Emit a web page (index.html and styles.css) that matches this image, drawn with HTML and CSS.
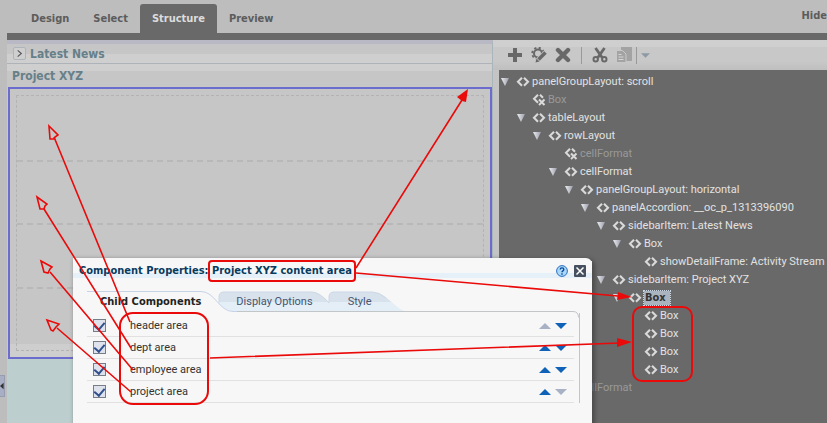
FILE: index.html
```html
<!DOCTYPE html>
<html lang="en">
<head>
<meta charset="utf-8">
<title>Composer - Structure view</title>
<link rel="stylesheet" href="styles.css">
</head>
<body>
<svg class="defs" aria-hidden="true">
  <symbol id="tag" viewBox="0 0 14 10"><path d="M6 .8 2 4.8 6 8.8M8 .8 12 4.8 8 8.8" fill="none" stroke="currentColor" stroke-width="2.1"/></symbol>
  <symbol id="tag-off" viewBox="0 0 14 12"><path d="M6 .8 2 4.8 6 8.8M8 .8 11 3.8M7 5.5l5.500 5.500M12.500 5.500 7 11" fill="none" stroke="currentColor" stroke-width="2"/></symbol>
  <symbol id="up" viewBox="0 0 12 6"><path d="M0 6 6 0l6 6z" fill="currentColor"/></symbol>
  <symbol id="down" viewBox="0 0 12 6"><path d="M0 0h12L6 6z" fill="currentColor"/></symbol>
  <linearGradient id="tri" x1="0" x2="1"><stop offset="0" stop-color="#eee"/><stop offset="1" stop-color="#9a9dae"/></linearGradient>
</svg>
<header class="top">
  <nav class="modes">
    <button>Design</button><button>Select</button><button class="on">Structure</button><button>Preview</button>
  </nav>
  <a class="hide" href="#">Hide</a>
</header>
<main class="work">
  <div class="gutter"><button class="collapse" aria-label="Collapse"><svg viewBox="0 0 5 8"><path d="M4.500 0v8L0 4z" fill="#333"/></svg></button></div>
  <section class="page">
    <h2 class="acc"><button class="expand" aria-label="Expand"><svg viewBox="0 0 12 12"><path d="M4 2.500 8 6 4 9.500" fill="none" stroke="#555" stroke-width="1.200"/></svg></button>Latest News</h2>
    <h2 class="acc second">Project XYZ</h2>
    <div class="content"><div class="boxes"><div></div><div></div><div></div><div></div></div></div>
  </section>
  <section class="side">
    <div class="tools">
      <button aria-label="Add"><svg viewBox="0 0 16 16"><path d="M8 1v14M1 8h14" stroke="#686868" stroke-width="4"/></svg></button>
      <button aria-label="Edit"><svg viewBox="0 0 16 16"><circle cx="7" cy="6.500" r="4" fill="none" stroke="#686868" stroke-width="2"/><circle cx="7" cy="6.500" r="5.800" fill="none" stroke="#686868" stroke-width="1.800" stroke-dasharray="2.200 2.350"/><path d="M5 15.500 15.500 5" stroke="#c8c8c8" stroke-width="5.500"/><path d="M7.500 12.500 14.500 5.500" stroke="#686868" stroke-width="3.600"/><path d="m4.500 15.500 1-4 3 3z" fill="#686868"/></svg></button>
      <button aria-label="Delete"><svg viewBox="0 0 16 16"><path d="m3 3 10 10M13 3 3 13" stroke="#686868" stroke-width="4.400" stroke-linecap="round"/></svg></button>
      <i class="sep"></i>
      <button aria-label="Cut"><svg viewBox="0 0 16 16"><path d="M3.500 1 10.500 11M12.500 1 5.500 11" stroke="#686868" stroke-width="2.800"/><circle cx="3.700" cy="12.300" r="2.200" fill="none" stroke="#686868" stroke-width="2"/><circle cx="12.300" cy="12.300" r="2.200" fill="none" stroke="#686868" stroke-width="2"/></svg></button>
      <button aria-label="Copy"><svg viewBox="0 0 16 16"><path d="M5 0h11v14H5z" fill="#a3a3a3"/><path d="M.5 3.500h6l3.500 3.500v8.500H.5z" fill="#a3a3a3" stroke="#c8c8c8"/><path d="M2.500 7.500h3M2.500 10h5M2.500 12.500h5" stroke="#d5d5d5"/></svg></button>
      <i class="sep near"></i>
      <button class="more" aria-label="More"><svg viewBox="0 0 10 5"><path d="M0 0h10L5 5z" fill="#8d9aa5"/></svg></button>
    </div>
    <div class="tree">
      <ul>
        <li><span class="node open"><svg class="tw" viewBox="0 0 8 8"><path d="M0 0h8L4 8z" fill="url(#tri)"/></svg><svg class="ic"><use href="#tag"/></svg>panelGroupLayout: scroll</span>
        <ul>
          <li><span class="node off"><svg class="ic x"><use href="#tag-off"/></svg>Box</span></li>
          <li><span class="node open"><svg class="tw" viewBox="0 0 8 8"><path d="M0 0h8L4 8z" fill="url(#tri)"/></svg><svg class="ic"><use href="#tag"/></svg>tableLayout</span>
          <ul>
            <li><span class="node open"><svg class="tw" viewBox="0 0 8 8"><path d="M0 0h8L4 8z" fill="url(#tri)"/></svg><svg class="ic"><use href="#tag"/></svg>rowLayout</span>
            <ul>
              <li><span class="node off"><svg class="ic x"><use href="#tag-off"/></svg>cellFormat</span></li>
              <li><span class="node open"><svg class="tw" viewBox="0 0 8 8"><path d="M0 0h8L4 8z" fill="url(#tri)"/></svg><svg class="ic"><use href="#tag"/></svg>cellFormat</span>
              <ul>
                <li><span class="node open"><svg class="tw" viewBox="0 0 8 8"><path d="M0 0h8L4 8z" fill="url(#tri)"/></svg><svg class="ic"><use href="#tag"/></svg>panelGroupLayout: horizontal</span>
                <ul>
                  <li><span class="node open"><svg class="tw" viewBox="0 0 8 8"><path d="M0 0h8L4 8z" fill="url(#tri)"/></svg><svg class="ic"><use href="#tag"/></svg>panelAccordion: __oc_p_1313396090</span>
                  <ul>
                    <li><span class="node open"><svg class="tw" viewBox="0 0 8 8"><path d="M0 0h8L4 8z" fill="url(#tri)"/></svg><svg class="ic"><use href="#tag"/></svg>sidebarItem: Latest News</span>
                    <ul>
                      <li><span class="node open"><svg class="tw" viewBox="0 0 8 8"><path d="M0 0h8L4 8z" fill="url(#tri)"/></svg><svg class="ic"><use href="#tag"/></svg>Box</span>
                      <ul><li><span class="node"><svg class="ic"><use href="#tag"/></svg>showDetailFrame: Activity Stream</span></li></ul></li>
                    </ul></li>
                    <li><span class="node open"><svg class="tw" viewBox="0 0 8 8"><path d="M0 0h8L4 8z" fill="url(#tri)"/></svg><svg class="ic"><use href="#tag"/></svg>sidebarItem: Project XYZ</span>
                    <ul>
                      <li><span class="node open"><svg class="tw" viewBox="0 0 8 8"><path d="M0 0h8L4 8z" fill="url(#tri)"/></svg><svg class="ic"><use href="#tag"/></svg><b class="picked">Box</b></span>
                      <ul>
                        <li><span class="node"><svg class="ic"><use href="#tag"/></svg>Box</span></li>
                        <li><span class="node"><svg class="ic"><use href="#tag"/></svg>Box</span></li>
                        <li><span class="node"><svg class="ic"><use href="#tag"/></svg>Box</span></li>
                        <li><span class="node"><svg class="ic"><use href="#tag"/></svg>Box</span></li>
                      </ul></li>
                    </ul></li>
                  </ul></li>
                </ul></li>
              </ul></li>
              <li><span class="node off"><svg class="ic x"><use href="#tag-off"/></svg>cellFormat</span></li>
            </ul></li>
          </ul></li>
        </ul></li>
      </ul>
    </div>
  </section>
</main>
<section class="dialog" role="dialog" aria-labelledby="dlg">
  <div class="title">
    <h1 id="dlg">Component Properties: Project XYZ content area</h1>
    <button aria-label="Help"><svg viewBox="0 0 12 12"><circle cx="6" cy="6" r="5.400" fill="#a9d8f8" stroke="#2b6fc0"/><path d="M4.200 4.500c0-2.200 3.600-2.200 3.600 0C7.800 6 6 5.700 6 7.200M6 8.300v1.400" fill="none" stroke="#0c4a9c" stroke-width="1.400"/></svg></button>
    <button aria-label="Close"><svg viewBox="0 0 12 12"><rect width="12" height="12" rx="1" fill="#46505f"/><path d="m2.500 2.500 7 7M9.500 2.500l-7 7" stroke="#fff" stroke-width="1.500"/></svg></button>
  </div>
  <div class="tabs">
    <svg class="edge" viewBox="0 0 500 22" aria-hidden="true">
      <defs><linearGradient id="tabfill" x2="0" y2="1"><stop offset=".5" stop-color="#d8e2ed"/><stop offset=".5" stop-color="#e4eef7"/></linearGradient></defs>
      <path d="M134 6q0-5 5-5h88c6 0 12 5 17 10v9.500h-96q-8-2-14-7z" fill="url(#tabfill)"/>
      <path d="M244 6q0-5 5-5h38c14 0 22 16 34 19.500h-77z" fill="url(#tabfill)"/>
      <path d="M134 12V6q0-5 5-5h88q7 0 17 11V6q0-5 5-5h38q7 0 14 6" fill="none" stroke="#ccd8e6"/>
      <path d="M2 .5h114c14 0 18 20 32 20h12" fill="none" stroke="#c6d3e6"/>
      <path d="M152 20.500h336q5.500 0 5.500 6" fill="none" stroke="#c3c6c9"/>
    </svg>
    <button class="on">Child Components</button><button>Display Options</button><button>Style</button>
  </div>
  <div class="list">
    <div class="row"><input type="checkbox" id="c1" checked><label for="c1">header area</label><button class="none" aria-label="Move up"><svg><use href="#up"/></svg></button><button aria-label="Move down"><svg><use href="#down"/></svg></button></div>
    <div class="row"><input type="checkbox" id="c2" checked><label for="c2">dept area</label><button aria-label="Move up"><svg><use href="#up"/></svg></button><button aria-label="Move down"><svg><use href="#down"/></svg></button></div>
    <div class="row"><input type="checkbox" id="c3" checked><label for="c3">employee area</label><button aria-label="Move up"><svg><use href="#up"/></svg></button><button aria-label="Move down"><svg><use href="#down"/></svg></button></div>
    <div class="row"><input type="checkbox" id="c4" checked><label for="c4">project area</label><button aria-label="Move up"><svg><use href="#up"/></svg></button><button class="none" aria-label="Move down"><svg><use href="#down"/></svg></button></div>
  </div>
</section>
<svg class="notes" width="827" height="423" viewBox="0 0 827 423" aria-hidden="true">
  <g fill="none" stroke="#ea0a0a" stroke-width="1.600">
    <path d="M130 322 54 137M131 348 44 209M133 370 50 272M131 392 57 328"/>
    <path d="m49 126 9 9-3 2-1 2-4 0zM37 197l10 7-2 2-1 3-4 0zM41 261l11 6-2 2-2 4-4-1zM47 320l12 4-3 3-3 4-2-1z"/>
    <path d="M356 268 462 100M356 273l262 23M210 358l410-15"/>
    <rect x="209" y="261" width="146" height="20" rx="3" stroke-width="2"/>
    <rect x="120" y="313" width="88" height="91" rx="13" stroke-width="2"/>
    <rect x="633" y="307" width="59" height="74" rx="9" stroke-width="2"/>
  </g>
  <path d="m468 89-2 13-4-1-5-4zM632 297l-15 3 1-8zM632 342l-15 5v-9z" fill="#ea0a0a"/>
</svg>
</body>
</html>
```
FILE: styles.css
```css
* { box-sizing: border-box; }
body {
  margin: 0;
  height: 100vh;
  position: relative;
  display: flex;
  flex-direction: column;
  overflow: hidden;
  background: #bdbdbd;
  font: 12px/18px Roboto, "Noto Sans", sans-serif;
}
h1, h2, ul { margin: 0; padding: 0; list-style: none; }
button { border: 0; padding: 0; background: none; font: inherit; color: inherit; }
svg { display: block; }
.defs { position: absolute; width: 0; height: 0; }
.top, .acc, .title h1, .tabs .on, .picked { font-family: "DejaVu Sans Condensed", "Noto Sans", sans-serif; font-weight: bold; }

.top {
  display: flex;
  align-items: stretch;
  justify-content: space-between;
  flex: none;
  height: 40px;
  margin-left: 7px;
  padding: 4px 0 0 12px;
  border-bottom: 7px solid #696969;
  font-size: 11px;
  color: #5c5c5c;
}
.modes { display: flex; }
.modes button { padding: 0 12px; }
.modes .on { background: #696969; color: #dcdcdc; border-radius: 3px 3px 0 0; }
.hide { line-height: 24px; color: inherit; text-decoration: none; }

.work { flex: 1; min-height: 0; display: grid; grid-template-columns: 7px 486fr 334fr; }
.gutter { padding-top: 335px; }
.collapse { width: 5px; height: 22px; background: #a8afc4; border: 1px solid #969db0; border-left: 0; display: flex; align-items: center; }
.collapse svg { width: 4px; height: 8px; }

.page { background: #bccfce; border-right: 1px solid #a9b4bb; border-top: 4px solid #b9b9c5; }
.acc {
  display: flex;
  align-items: center;
  gap: 4px;
  height: 20px;
  padding: 0 5px;
  border-bottom: 1px solid #adb3b9;
  background: linear-gradient(#c6c6c6 55%, #cfcfcf 55%);
  font-size: 12px;
  color: #66808a;
}
.second { height: 23px; border: 0; background: linear-gradient(#cfcfcf 30%, #c6c6c6 30%); }
.expand { margin-left: 1px; width: 13px; height: 13px; background: #cfcfcf; border: 1px solid #aeb4bb; border-radius: 2px; }
.content { height: 272px; margin-left: 1px; padding: 6px; border: 2px solid #6c6cce; background: linear-gradient(#c6c6c6 255px, #cecece 255px); }
.boxes { height: 100%; display: grid; grid-template-rows: repeat(4, 1fr); border: 1px dashed #b3b3b3; }
.boxes div + div { border-top: 2px dashed #b8b8b8; }

.side { min-width: 0; display: flex; flex-direction: column; background: #c4c4c4; }
.tools { height: 30px; flex: none; display: flex; align-items: center; gap: 8px; padding-left: 14px; background: linear-gradient(#cfcfcf 25%, #c8c8c8 25% 70%, #bfbfbf); }
.tools svg { width: 16px; height: 16px; }
.tools .more svg { width: 9px; height: 5px; }
.sep { width: 1px; height: 17px; margin: 0 2px; background: #999; }
.near { margin: 0 -4px; }
.tree { flex: 1; margin-left: 6px; padding: 3px 0 0 2px; background: #696969; color: #e2e2e2; white-space: nowrap; overflow: hidden; font-size: 11px; }
.tree ul ul { padding-left: 16px; }
.node { display: flex; align-items: center; height: 18px; padding-left: 15px; }
.open { padding-left: 0; }
.off { color: #999; }
.tw { width: 8px; height: 8px; margin-right: 7px; }
.ic { width: 14px; height: 10px; margin-right: 2px; color: #dadada; flex: none; }
.x { height: 12px; }
.picked { padding: 0 4px 0 1px; line-height: 14px; background: #a9b4bf; color: #333; outline: 1px dotted #ccd7e5; }

.dialog {
  position: absolute;
  left: 73px;
  top: 258px;
  width: 519px;
  height: 180px;
  padding-top: 3px;
  background: #f7f7f7;
  border-radius: 0 6px 0 0;
  box-shadow: 2px 2px 4px 1px #3338;
  color: #333;
  font-size: 11px;
}
.title { display: flex; align-items: center; gap: 6px; height: 20px; padding: 0 6px; background: linear-gradient(#f7f7f7 60%, #e6f0f8 60% 85%, #f7f7f7 85%); }
.title h1 { flex: 1; font-size: 11px; color: #083b60; }
.title svg { width: 12px; height: 12px; }
.tabs { position: relative; display: flex; height: 22px; margin: 10px 0 0 12px; padding-left: 15px; color: #45556e; }
.edge { position: absolute; left: 0; top: 0; width: 500px; height: 22px; z-index: 0; overflow: visible; }
.tabs button { position: relative; margin-right: 35px; }
.tabs .on { color: #222; }
.list { margin: 0 12px 0 14px; padding: 2px 5px 0 0; border-right: 1px solid #c3c6c9; }
.row { display: flex; align-items: center; height: 22px; padding: 0 7px 0 6px; border-bottom: 1px solid #e1e1e1; }
.row label { flex: 1; margin-left: 24px; }
.row input {
  appearance: none;
  width: 13px;
  height: 13px;
  margin: 0;
  border: 1px solid #777d86;
  background: #dde2ec;
  display: grid;
  place-items: center;
}
.row input::after { content: ""; width: 5px; height: 8px; margin-bottom: 2px; border: solid #304f8d; border-width: 0 2px 2px 0; transform: rotate(40deg); }
.row button { margin-left: 4px; color: #0f62b8; }
.row .none { color: #a9b1c4; }
.row svg { width: 12px; height: 6px; }
.notes { position: absolute; left: 0; top: 0; pointer-events: none; }
```
